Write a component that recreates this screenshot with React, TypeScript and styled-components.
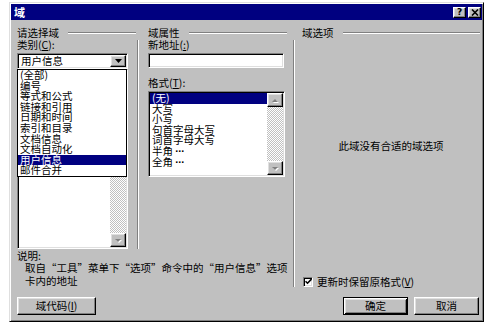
import React from "react";
import styled, { createGlobalStyle, css } from "styled-components";

const GlobalStyle = createGlobalStyle`
  html, body {
    margin: 0;
    padding: 0;
    background: #fff;
  }
  body {
    font-family: "Noto Sans CJK SC", "Noto Sans", sans-serif;
    font-size: 10.5px;
    color: #000;
  }
`;

const raised = css`
  border-top: 1px solid #fff;
  border-left: 1px solid #fff;
  border-right: 1px solid #000;
  border-bottom: 1px solid #000;
  box-shadow: inset -1px -1px #808080, inset 1px 1px #dfdfdf;
`;

const sunken = css`
  border-top: 1px solid #808080;
  border-left: 1px solid #808080;
  border-right: 1px solid #fff;
  border-bottom: 1px solid #fff;
  box-shadow: inset 1px 1px #000, inset -1px -1px #dfdfdf;
`;

const Window = styled.div`
  box-sizing: border-box;
  margin: 2px 0 0 9px;
  width: 475px;
  height: 320px;
  padding: 1px;
  background: #c0c0c0;
  border-top: 1px solid #dfdfdf;
  border-left: 1px solid #dfdfdf;
  border-right: 1px solid #000;
  border-bottom: 1px solid #000;
  box-shadow: inset 1px 1px #fff, inset -1px -1px #808080;
  display: flex;
  flex-direction: column;
`;

const TitleBar = styled.div`
  height: 16px;
  background: #000080;
  display: flex;
  align-items: center;
  padding: 0 1px 0 3px;
`;

const TitleText = styled.span`
  flex: 1;
  color: #fff;
  font-weight: bold;
  font-size: 11px;
  line-height: 16px;
`;

const TitleButton = styled.div`
  box-sizing: border-box;
  width: 13px;
  height: 11px;
  margin-left: 2px;
  background: #c0c0c0;
  ${raised};
  display: flex;
  align-items: center;
  justify-content: center;
  font-family: "DejaVu Sans", sans-serif;
  font-weight: bold;
  font-size: 9px;
  line-height: 9px;
`;

const Content = styled.div`
  display: flex;
  flex-direction: column;
  padding: 6px 0 0 6px;
`;

const TopRow = styled.div`
  display: flex;
  height: 261px;
`;

const LeftArea = styled.div`
  width: 276px;
  display: flex;
  flex-direction: column;
`;

const Upper = styled.div`
  display: flex;
`;

const Column = styled.div<{ $w: number; $ml?: number }>`
  width: ${(p) => p.$w}px;
  margin-left: ${(p) => p.$ml || 0}px;
  display: flex;
  flex-direction: column;
`;

const Header = styled.div<{ $pr?: number }>`
  display: flex;
  align-items: center;
  gap: 9px;
  height: 13px;
  line-height: 13px;
  padding-right: ${(p) => p.$pr || 0}px;
  white-space: nowrap;
`;

const HeaderLine = styled.div`
  flex: 1;
  height: 0;
  border-top: 1px solid #808080;
  border-bottom: 1px solid #fff;
`;

const ColBody = styled.div`
  display: flex;
`;

const Stack = styled.div<{ $w: number }>`
  width: ${(p) => p.$w}px;
  display: flex;
  flex-direction: column;
`;

const VRule = styled.div<{ $mt?: number; $ml?: number }>`
  width: 0;
  margin-top: ${(p) => p.$mt || 0}px;
  margin-left: ${(p) => p.$ml || 0}px;
  border-left: 1px solid #808080;
  border-right: 1px solid #fff;
`;

const Label = styled.div<{ $mt?: number }>`
  line-height: 12px;
  height: 12px;
  margin-top: ${(p) => p.$mt || 0}px;
  white-space: nowrap;
`;

const Combo = styled.div`
  box-sizing: border-box;
  margin-top: 2px;
  width: 111px;
  height: 16px;
  background: #fff;
  ${sunken};
  display: flex;
  align-items: center;
  padding: 0 1px 0 3px;
`;

const ComboText = styled.span`
  flex: 1;
  line-height: 12px;
`;

const DropButton = styled.div`
  box-sizing: border-box;
  width: 16px;
  height: 12px;
  background: #c0c0c0;
  ${raised};
  display: flex;
  align-items: center;
  justify-content: center;
`;

const TextInput = styled.div`
  box-sizing: border-box;
  margin-top: 2px;
  width: 136px;
  height: 15px;
  background: #fff;
  ${sunken};
`;

const ListWrap = styled.div`
  position: relative;
`;

const ListBox = styled.div<{ $w: number; $h: number; $mt?: number }>`
  box-sizing: border-box;
  width: ${(p) => p.$w}px;
  height: ${(p) => p.$h}px;
  margin-top: ${(p) => p.$mt || 0}px;
  background: #fff;
  ${sunken};
  padding: 1px;
  display: flex;
`;

const Items = styled.div`
  flex: 1;
`;

const Item = styled.div<{ $selected?: boolean }>`
  height: 10.6px;
  line-height: 10.6px;
  padding-left: 2px;
  white-space: nowrap;
  background: ${(p) => (p.$selected ? "#000080" : "transparent")};
  color: ${(p) => (p.$selected ? "#fff" : "#000")};
`;

const Dots = styled.span`
  font-family: "Liberation Sans", sans-serif;
  font-weight: bold;
  letter-spacing: -0.5px;
`;

const ScrollBar = styled.div`
  width: 16px;
  display: flex;
  flex-direction: column;
`;

const Arrow = styled.div`
  box-sizing: border-box;
  height: 14px;
  background: #c0c0c0;
  ${raised};
  display: flex;
  align-items: center;
  justify-content: center;
`;

const Track = styled.div`
  flex: 1;
  background: repeating-conic-gradient(#c0c0c0 0 25%, #fff 0 50%) 0 0 / 2px 2px;
`;

const DropList = styled.div`
  position: absolute;
  top: 0;
  left: 0;
  box-sizing: border-box;
  width: 110px;
  height: 108px;
  background: #fff;
  border: 1px solid #000;
  z-index: 1;
`;

const Description = styled.div`
  margin-top: 1px;
  white-space: nowrap;
`;

const DescTitle = styled.div`
  line-height: 11px;
`;

const DescText = styled.div`
  padding-left: 8px;
  line-height: 13px;
`;

const RightArea = styled.div`
  width: 178px;
  margin-left: 7px;
  display: flex;
  flex-direction: column;
`;

const OptionsArea = styled.div`
  height: 212px;
  display: flex;
  align-items: center;
  justify-content: center;
`;

const CheckRow = styled.div`
  margin-top: auto;
  height: 11px;
  line-height: 11px;
  display: flex;
  align-items: center;
  padding-left: 1px;
  white-space: nowrap;
`;

const CheckBox = styled.div`
  box-sizing: border-box;
  width: 10px;
  height: 10px;
  margin-right: 4px;
  background: #fff;
  ${sunken};
  display: flex;
  align-items: center;
  justify-content: center;
`;

const ButtonRow = styled.div`
  display: flex;
  margin-top: 10px;
  padding-right: 3px;
  gap: 6px;
`;

const Spacer = styled.div`
  flex: 1;
`;

const Button = styled.div<{ $w: number; $default?: boolean }>`
  box-sizing: border-box;
  width: ${(p) => p.$w}px;
  height: 18px;
  background: #c0c0c0;
  display: flex;
  align-items: center;
  justify-content: center;
  line-height: 12px;
  ${(p) =>
    p.$default
      ? css`
          border: 1px solid #000;
          box-shadow: inset 1px 1px #fff, inset -1px -1px #000,
            inset 2px 2px #dfdfdf, inset -2px -2px #808080;
        `
      : raised};
`;

const DownTri = ({ color = "#000" }: { color?: string }) => (
  <svg width="7" height="4" viewBox="0 0 7 4">
    <path d="M0 0h7L3.5 4z" fill={color} />
  </svg>
);

const ScrollArrow = ({ up }: { up?: boolean }) => (
  <svg width="8" height="5" viewBox="0 0 8 5">
    <path
      d={up ? "M1 4h6L4 1z" : "M1 1h6L4 4z"}
      fill="#fff"
      transform="translate(1 1)"
    />
    <path d={up ? "M1 4h6L4 1z" : "M1 1h6L4 4z"} fill="#808080" />
  </svg>
);

const categories = [
  "(全部)",
  "编号",
  "等式和公式",
  "链接和引用",
  "日期和时间",
  "索引和目录",
  "文档信息",
  "文档自动化",
  "用户信息",
  "邮件合并",
];

const formats: [string, boolean][] = [
  ["(无)", false],
  ["大写", false],
  ["小写", false],
  ["句首字母大写", false],
  ["词首字母大写", false],
  ["半角 ", true],
  ["全角 ", true],
];

export default function App() {
  return (
    <>
      <GlobalStyle />
      <Window>
        <TitleBar>
          <TitleText>域</TitleText>
          <TitleButton>?</TitleButton>
          <TitleButton>
            <svg width="8" height="7" viewBox="0 0 8 7">
              <path d="M1 0.5l6 6M7 0.5l-6 6" stroke="#000" strokeWidth="1.6" />
            </svg>
          </TitleButton>
        </TitleBar>
        <Content>
          <TopRow>
            <LeftArea>
              <Upper>
                <Column $w={121}>
                  <Header $pr={2}>
                    请选择域
                    <HeaderLine />
                  </Header>
                  <ColBody>
                    <Stack $w={111}>
                      <Label>
                        类别(<u>C</u>):
                      </Label>
                      <Combo>
                        <ComboText>用户信息</ComboText>
                        <DropButton>
                          <DownTri />
                        </DropButton>
                      </Combo>
                      <ListWrap>
                        <ListBox $w={111} $h={180}>
                          <Items />
                          <ScrollBar>
                            <Arrow>
                              <ScrollArrow up />
                            </Arrow>
                            <Track />
                            <Arrow>
                              <ScrollArrow />
                            </Arrow>
                          </ScrollBar>
                        </ListBox>
                        <DropList>
                          {categories.map((c, i) => (
                            <Item key={c} $selected={i === 8}>
                              {c}
                            </Item>
                          ))}
                        </DropList>
                      </ListWrap>
                    </Stack>
                    <VRule $mt={1} $ml={9} />
                  </ColBody>
                </Column>
                <Column $w={145} $ml={10}>
                  <Header $pr={6}>
                    域属性
                    <HeaderLine />
                  </Header>
                  <Stack $w={145}>
                    <Label>
                      新地址(<u>:</u>)
                    </Label>
                    <TextInput />
                    <Label $mt={9}>
                      格式(<u>T</u>):
                    </Label>
                    <ListBox $w={137} $h={86} $mt={2}>
                      <Items>
                        {formats.map(([f, dots], i) => (
                          <Item key={f} $selected={i === 0}>
                            {f}
                            {dots && <Dots>···</Dots>}
                          </Item>
                        ))}
                      </Items>
                      <ScrollBar>
                        <Arrow>
                          <ScrollArrow up />
                        </Arrow>
                        <Track />
                        <Arrow>
                          <ScrollArrow />
                        </Arrow>
                      </ScrollBar>
                    </ListBox>
                  </Stack>
                </Column>
              </Upper>
              <Description>
                <DescTitle>说明:</DescTitle>
                <DescText>
                  取自“工具”菜单下“选项”命令中的“用户信息”选项
                </DescText>
                <DescText>卡内的地址</DescText>
              </Description>
            </LeftArea>
            <VRule $mt={14} />
            <RightArea>
              <Header>
                域选项
                <HeaderLine />
              </Header>
              <OptionsArea>此域没有合适的域选项</OptionsArea>
              <CheckRow>
                <CheckBox>
                  <svg width="7" height="7" viewBox="0 0 7 7">
                    <path
                      d="M0.5 3.2l2 2 4-4.2"
                      stroke="#000"
                      strokeWidth="1.6"
                      fill="none"
                    />
                  </svg>
                </CheckBox>
                更新时保留原格式(<u>V</u>)
              </CheckRow>
            </RightArea>
          </TopRow>
          <ButtonRow>
            <Button $w={79}>
              域代码(<u>I</u>)
            </Button>
            <Spacer />
            <Button $w={65} $default>
              确定
            </Button>
            <Button $w={65}>取消</Button>
          </ButtonRow>
        </Content>
      </Window>
    </>
  );
}
